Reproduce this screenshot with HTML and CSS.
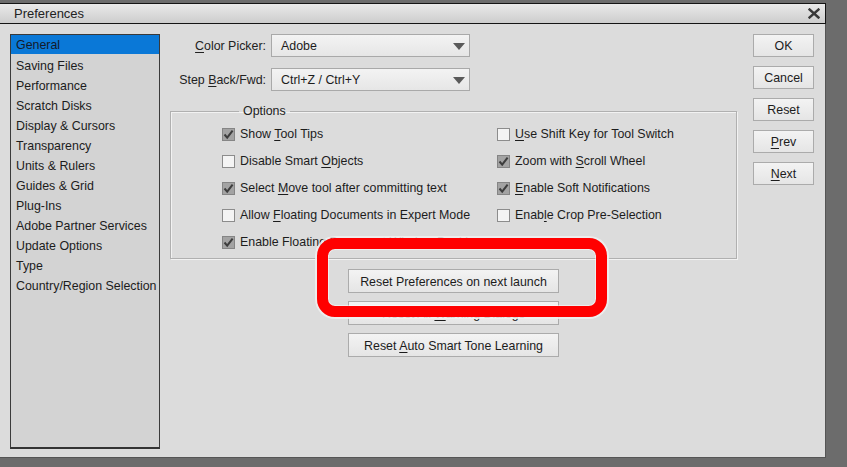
FILE: index.html
```html
<!DOCTYPE html>
<html>
<head>
<meta charset="utf-8">
<link rel="stylesheet" href="styles.css">
</head>
<body>
<div class="dialog">
  <div class="titlebar">
    <span class="title">Preferences</span>
    <svg class="close" width="12" height="11" viewBox="0 0 12 11"><path d="M1.5 1.5 L10.5 9.5 M10.5 1.5 L1.5 9.5" stroke="#3a3a3a" stroke-width="2.4" stroke-linecap="square"/></svg>
  </div>
  <div class="main">
    <ul class="nav">
      <li class="sel">General</li>
      <li>Saving Files</li>
      <li>Performance</li>
      <li>Scratch Disks</li>
      <li>Display &amp; Cursors</li>
      <li>Transparency</li>
      <li>Units &amp; Rulers</li>
      <li>Guides &amp; Grid</li>
      <li>Plug-Ins</li>
      <li>Adobe Partner Services</li>
      <li>Update Options</li>
      <li>Type</li>
      <li>Country/Region Selection</li>
    </ul>
    <div class="panel">
      <div class="pickers">
        <label class="lbl"><u>C</u>olor Picker:</label>
        <div class="select"><span>Adobe</span><span class="arrow"></span></div>
        <label class="lbl">Step <u>B</u>ack/Fwd:</label>
        <div class="select"><span>Ctrl+Z / Ctrl+Y</span><span class="arrow"></span></div>
      </div>
      <fieldset class="options">
        <legend>Options</legend>
        <div class="grid">
          <div class="cb"><span class="box on"><svg width="13" height="13" viewBox="0 0 13 13"><path d="M2.5 6.5 L5.2 9.6 L10.6 2.6" fill="none" stroke="#3d3d3d" stroke-width="2"/></svg></span><span>Show <u>T</u>ool Tips</span></div>
          <div class="cb"><span class="box"></span><span>Disable Smart <u>O</u>bjects</span></div>
          <div class="cb"><span class="box on"><svg width="13" height="13" viewBox="0 0 13 13"><path d="M2.5 6.5 L5.2 9.6 L10.6 2.6" fill="none" stroke="#3d3d3d" stroke-width="2"/></svg></span><span>Select <u>M</u>ove tool after committing text</span></div>
          <div class="cb"><span class="box"></span><span>Allow <u>F</u>loating Documents in Expert Mode</span></div>
          <div class="cb"><span class="box on"><svg width="13" height="13" viewBox="0 0 13 13"><path d="M2.5 6.5 L5.2 9.6 L10.6 2.6" fill="none" stroke="#3d3d3d" stroke-width="2"/></svg></span><span>Enable Floating Document <u>W</u>indow Docking</span></div>
          <div class="cb"><span class="box"></span><span><u>U</u>se Shift Key for Tool Switch</span></div>
          <div class="cb"><span class="box on"><svg width="13" height="13" viewBox="0 0 13 13"><path d="M2.5 6.5 L5.2 9.6 L10.6 2.6" fill="none" stroke="#3d3d3d" stroke-width="2"/></svg></span><span>Zoom with <u>S</u>croll Wheel</span></div>
          <div class="cb"><span class="box on"><svg width="13" height="13" viewBox="0 0 13 13"><path d="M2.5 6.5 L5.2 9.6 L10.6 2.6" fill="none" stroke="#3d3d3d" stroke-width="2"/></svg></span><span><u>E</u>nable Soft Notifications</span></div>
          <div class="cb"><span class="box"></span><span>Enab<u>l</u>e Crop Pre-Selection</span></div>
        </div>
      </fieldset>
      <div class="resets">
        <button class="btn wide">Reset Preferences on next launch</button>
        <button class="btn wide">Reset All <u>W</u>arning Dialogs</button>
        <button class="btn wide">Reset <u>A</u>uto Smart Tone Learning</button>
      </div>
      <div class="highlight"></div>
    </div>
    <div class="actions">
      <button class="btn side">OK</button>
      <button class="btn side">Cancel</button>
      <button class="btn side">Reset</button>
      <button class="btn side"><u>P</u>rev</button>
      <button class="btn side"><u>N</u>ext</button>
    </div>
  </div>
</div>
</body>
</html>
```
FILE: styles.css
```css
* { box-sizing: border-box; }
html, body { margin: 0; padding: 0; }
body {
  width: 847px;
  height: 467px;
  overflow: hidden;
  background: #6c6c6c;
  font-family: "Liberation Sans", Arial, sans-serif;
  font-size: 12.4px;
  color: #1c1c1c;
}
u { text-decoration: underline; text-underline-offset: 2px; }
.dialog {
  margin-top: 3px;
  width: 826px;
  height: 455px;
  background: #dcdcdc;
  border-right: 1px solid #555;
  border-bottom: 1px solid #555;
  display: flex;
  flex-direction: column;
}
.titlebar {
  height: 21px;
  border: 1px solid #141414;
  border-left: none;
  background: linear-gradient(#e9e9e9, #cdcdcd);
  display: flex;
  align-items: center;
  justify-content: space-between;
  padding: 0 5px 0 14px;
  margin-right: -1px;
}
.title { font-size: 13px; color: #222; }
.close { display: block; }
.main {
  flex: 1;
  display: flex;
  padding: 10px 0 8px 10px;
}
.nav {
  list-style: none;
  margin: 0;
  padding: 0;
  width: 150px;
  background: #d3d3d3;
  border: 1px solid #3a3a3a;
  border-bottom: 2px solid #333;
}
.nav li {
  height: 20px;
  line-height: 22px;
  overflow: hidden;
  padding-left: 5px;
  white-space: nowrap;
}
.nav li.sel { background: #0a78d7; color: #141a2a; height: 19px; line-height: 21px; margin-bottom: 1px; }
.panel {
  position: relative;
  margin-left: 10px;
  width: 567px;
}
.pickers {
  display: grid;
  grid-template-columns: 96px 199px;
  grid-auto-rows: 23px;
  column-gap: 5px;
  row-gap: 11px;
  align-items: center;
}
.lbl { text-align: right; color: #222; padding-top: 1px; }
.select {
  height: 23px;
  border: 1px solid #a9a9a9;
  background: linear-gradient(#f3f3f3, #e6e6e6);
  display: flex;
  align-items: center;
  justify-content: space-between;
  padding: 1px 4px 0 9px;
}
.arrow {
  width: 0;
  height: 0;
  border-left: 6px solid transparent;
  border-right: 6px solid transparent;
  border-top: 7px solid #5a5a5a;
}
.options {
  margin: 12px 0 0 0;
  padding: 6px 0 7px 51px;
  border: 1px solid #b0b0b0;
  box-shadow: 1px 1px 0 #f2f2f2, inset 1px 1px 0 #f2f2f2;
  min-width: 0;
}
.options legend {
  margin-left: 17px;
  padding: 0 4px;
  line-height: 16px;
  color: #222;
}
.grid {
  display: grid;
  grid-template-rows: repeat(5, 18px);
  grid-auto-flow: column;
  grid-template-columns: 275px auto;
  row-gap: 9px;
}
.cb {
  display: flex;
  align-items: center;
  white-space: nowrap;
}
.box {
  width: 13px;
  height: 13px;
  margin-right: 5px;
  border: 1px solid #8c8c8c;
  background: #f4f4f4;
  flex: none;
  position: relative;
}
.box.on { background: #a3a3a3; border-color: #858585; }
.box svg { position: absolute; left: -1px; top: -1px; }
.resets {
  margin-top: 10px;
  display: flex;
  flex-direction: column;
  align-items: center;
  gap: 8px;
}
.btn {
  font-family: inherit;
  font-size: inherit;
  color: #1c1c1c;
  border: 1px solid #ababab;
  background: linear-gradient(#f3f3f3, #e5e5e5);
  padding: 1px 0 0 0;
  margin: 0;
}
.wide { width: 211px; height: 24px; }
.actions {
  margin-left: 16px;
  display: flex;
  flex-direction: column;
  gap: 9px;
}
.side { width: 61px; height: 23px; }
.highlight {
  position: absolute;
  left: 147px;
  top: 204px;
  width: 290px;
  height: 79px;
  border: 11px solid #ff0000;
  border-radius: 18px;
  box-shadow: 0 0 0 2px rgba(240,240,240,0.85), inset 0 0 0 1px rgba(255,255,255,0.5);
}
```
